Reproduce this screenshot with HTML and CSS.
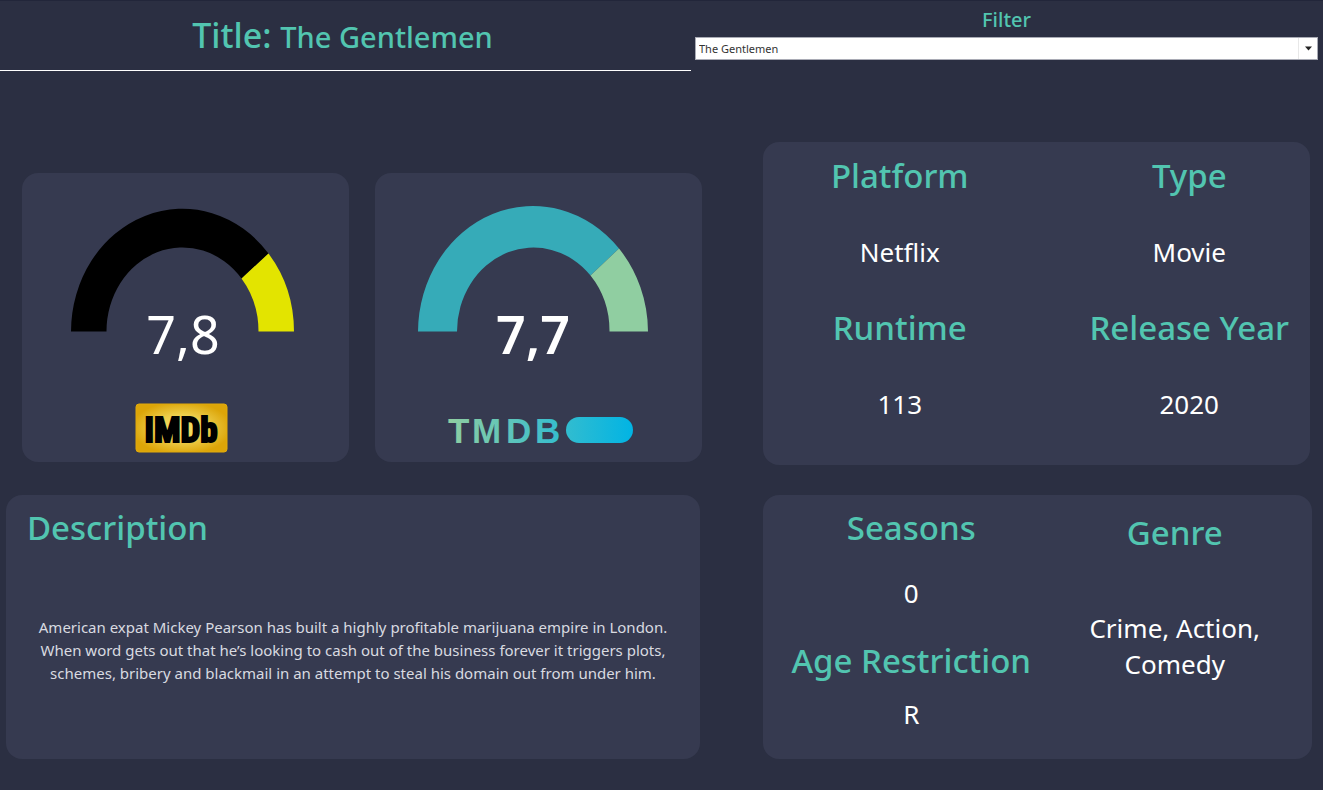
FILE: index.html
```html
<!DOCTYPE html>
<html lang="en">
<head>
<meta charset="utf-8">
<meta name="viewport" content="width=device-width, initial-scale=1">
<title>The Gentlemen</title>
<link rel="stylesheet" href="styles.css">
</head>
<body>
<header class="topbar">
  <h1 class="title">Title: <span class="title-name">The Gentlemen</span></h1>
  <div class="filter">
    <label class="filter-label" for="title-filter">Filter</label>
    <div class="filter-field">
      <select class="filter-select" id="title-filter">
        <option>The Gentlemen</option>
      </select>
      <svg class="filter-arrow" viewBox="0 0 7 4" aria-hidden="true"><path d="M0 0h7L3.500 4z"/></svg>
    </div>
  </div>
</header>
<main class="board">
  <div class="column column-left">
    <div class="scores">
      <section class="card score" aria-label="IMDb score">
        <svg class="art" viewBox="0 0 327 200">
          <path fill="#000" d="M49 158.500A111.500 123 0 0 1 246.500 80.500L219.500 105.500A76 84 0 0 0 84.500 158.500Z"/>
          <path fill="#e3e400" d="M246.500 80.500A111.500 123 0 0 1 272 158.500H236.500A76 84 0 0 0 219.500 105.500Z"/>
          <text class="score-value" x="161" y="181">7,8</text>
        </svg>
        <svg class="art" viewBox="0 0 327 89">
          <defs>
            <radialGradient id="gold" cx="0.5" cy="0.5" r="0.55">
              <stop offset="0" stop-color="#f6e26a"/>
              <stop offset="0.500" stop-color="#edce4c"/>
              <stop offset="1" stop-color="#dca508"/>
            </radialGradient>
          </defs>
          <rect x="114" y="31" width="91" height="48" rx="3" fill="url(#gold)" stroke="#e2aa0a"/>
          <text class="imdb" x="159" y="69">IMDb</text>
        </svg>
      </section>
      <section class="card score" aria-label="TMDB score">
        <svg class="art" viewBox="0 0 327 200">
          <path fill="#36abb8" d="M43 158.500A115 126.500 0 0 1 244 75.500L215.500 102.500A76.500 84 0 0 0 82 158.500Z"/>
          <path fill="#90cea1" d="M244 75.500A115 126.500 0 0 1 273 158.500H234.500A76.500 84 0 0 0 215.500 102.500Z"/>
          <text class="score-value score-value-strong" x="158" y="181">7,7</text>
        </svg>
        <svg class="art" viewBox="0 0 327 89">
          <defs>
            <linearGradient id="sea" gradientUnits="userSpaceOnUse" x1="73" y1="0" x2="258" y2="0">
              <stop offset="0" stop-color="#90cea1"/>
              <stop offset="0.560" stop-color="#3cbecb"/>
              <stop offset="1" stop-color="#01b4e4"/>
            </linearGradient>
          </defs>
          <text class="tmdb" x="73 97 131 160" y="70" fill="url(#sea)">TMDB</text>
          <rect x="191" y="44" width="67" height="26" rx="13" fill="url(#sea)"/>
        </svg>
      </section>
    </div>
    <section class="card description">
      <h2 class="heading">Description</h2>
      <p class="description-text">American expat Mickey Pearson has built a highly profitable marijuana empire in London. When word gets out that he’s looking to cash out of the business forever it triggers plots, schemes, bribery and blackmail in an attempt to steal his domain out from under him.</p>
    </section>
  </div>
  <div class="column column-right">
    <section class="card facts">
      <div class="facts-column">
        <h2 class="heading">Platform</h2>
        <p class="value">Netflix</p>
        <h2 class="heading">Runtime</h2>
        <p class="value">113</p>
      </div>
      <div class="facts-column facts-column-end">
        <h2 class="heading">Type</h2>
        <p class="value">Movie</p>
        <h2 class="heading">Release Year</h2>
        <p class="value">2020</p>
      </div>
    </section>
    <section class="card details">
      <div class="details-main">
        <div class="fact">
          <h2 class="heading">Seasons</h2>
          <p class="value">0</p>
        </div>
        <div class="fact fact-tight">
          <h2 class="heading">Age Restriction</h2>
          <p class="value">R</p>
        </div>
      </div>
      <div class="details-genre">
        <h2 class="heading">Genre</h2>
        <p class="value genre-list">Crime, Action, Comedy</p>
      </div>
    </section>
  </div>
</main>
</body>
</html>
```

FILE: styles.css
```css
* {
  box-sizing: border-box;
}

body {
  margin: 0;
  min-height: 100vh;
  background: #2b2f42;
  color: #fff;
  font-family: "Noto Sans", "Open Sans", sans-serif;
}

h1, h2, p {
  margin: 0;
}

.topbar {
  display: grid;
  grid-template-columns: 691fr 632fr;
  border-top: 1px solid #22263a;
}

.title {
  height: 70px;
  padding: 9px 6px 0 0;
  border-bottom: 1px solid #fff;
  color: #52c5b0;
  font-size: 34px;
  font-weight: 500;
  line-height: 50px;
  text-align: center;
}

.title-name {
  font-size: 29px;
}

.filter {
  display: flex;
  flex-direction: column;
  gap: 2px;
  padding: 4px 5px 0 4px;
}

.filter-label {
  color: #52c5b0;
  font-size: 20px;
  font-weight: 500;
  line-height: 30px;
  text-align: center;
}

.filter-field {
  position: relative;
}

.filter-select {
  display: block;
  width: 100%;
  height: 23px;
  padding: 0 20px 0 3px;
  border: 1px solid #a9abb5;
  border-radius: 0;
  appearance: none;
  background: linear-gradient(#e8e8e8, #e8e8e8) right 18px top 0 / 1px 100% no-repeat #fff;
  color: #333;
  font-family: inherit;
  font-size: 11px;
}

.filter-arrow {
  position: absolute;
  top: 9px;
  right: 6px;
  width: 7px;
  height: 5px;
  fill: #222;
  pointer-events: none;
}

.board {
  display: grid;
  grid-template-columns: 702fr 621fr;
  align-items: start;
  padding-bottom: 31px;
}

.column {
  display: flex;
  flex-direction: column;
}

.column-left {
  gap: 33px;
  padding-top: 102px;
}

.column-right {
  gap: 30px;
  padding: 71px 11px 0 61px;
}

.card {
  border-radius: 16px;
  background: #363a50;
}

.scores {
  display: grid;
  grid-template-columns: 1fr 1fr;
  gap: 26px;
  padding-left: 22px;
}

.art {
  display: block;
  width: 100%;
}

.score-value {
  fill: #fff;
  font-size: 52px;
  text-anchor: middle;
}

.score-value-strong {
  font-weight: 600;
}

.imdb {
  fill: #000;
  stroke: #000;
  stroke-width: 2px;
  font-family: "Liberation Sans Narrow", "Roboto Condensed", "DejaVu Sans Condensed", sans-serif;
  font-size: 35px;
  font-weight: 700;
  text-anchor: middle;
}

.tmdb {
  font-family: "Liberation Sans", sans-serif;
  font-size: 35px;
  font-weight: 700;
}

.heading {
  color: #52c5b0;
  font-size: 33px;
  font-weight: 500;
  line-height: 46px;
}

.value {
  font-size: 26px;
  line-height: 36px;
}

.description {
  display: flex;
  flex-direction: column;
  gap: 65px;
  margin: 0 2px 0 6px;
  padding: 10px 21px 74px;
}

.description-text {
  color: #d9dae0;
  font-size: 15px;
  line-height: 23px;
  text-align: center;
}

.facts {
  display: grid;
  grid-template-columns: 1fr 1fr;
  margin-right: 2px;
  padding: 11px 0 43px;
  text-align: center;
}

.facts-column {
  display: flex;
  flex-direction: column;
  gap: 35px;
}

.facts-column-end {
  padding-left: 32px;
}

.details {
  display: grid;
  grid-template-columns: 54fr 46fr;
  padding: 10px 0 27px;
  text-align: center;
}

.details-main {
  display: flex;
  flex-direction: column;
  gap: 27px;
}

.fact {
  display: flex;
  flex-direction: column;
  gap: 24px;
}

.fact-tight {
  gap: 12px;
}

.details-genre {
  display: flex;
  flex-direction: column;
  gap: 54px;
  padding: 5px 22px 0 0;
}

.genre-list {
  padding: 0 20px;
}
```
